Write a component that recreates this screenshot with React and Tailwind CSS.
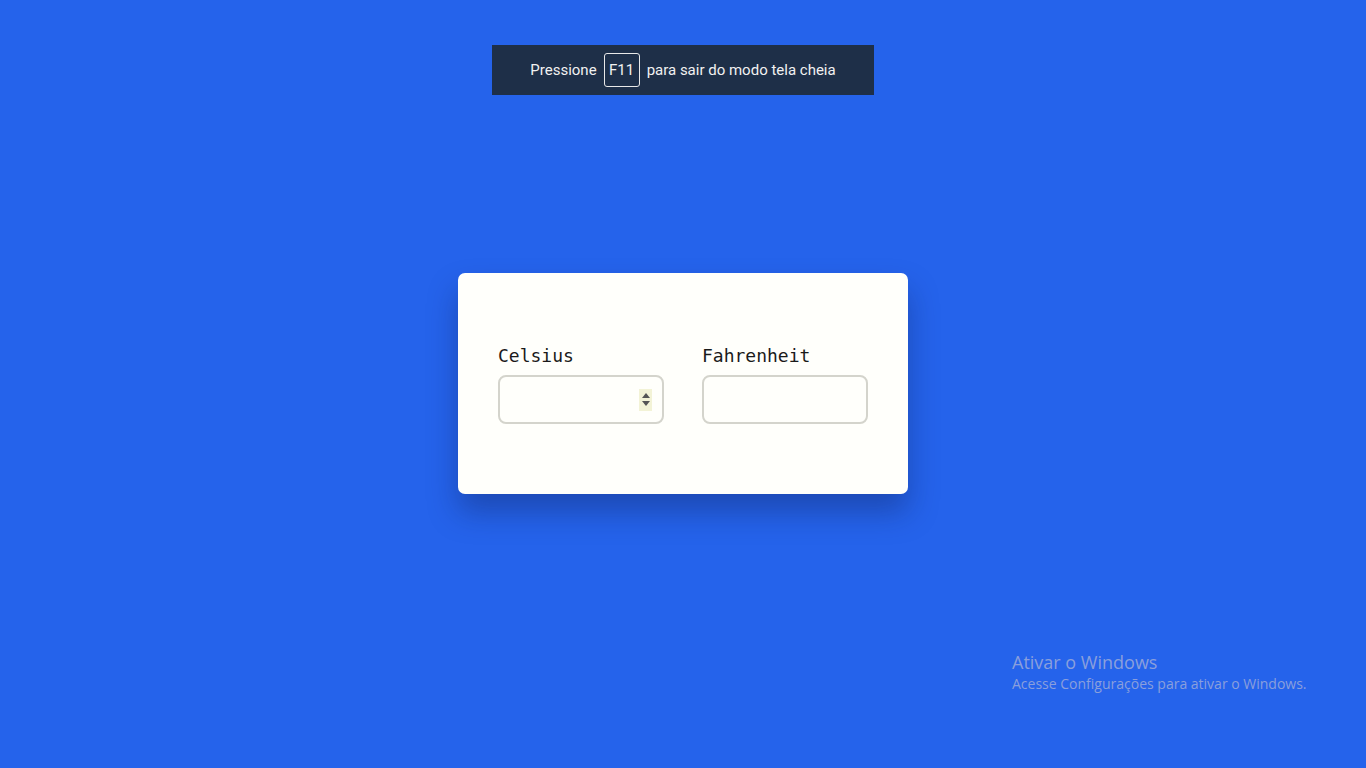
import React from 'react';

export default function App() {
  return (
    <div className="relative min-h-screen w-full bg-[#2563eb] flex flex-col items-center overflow-hidden">
      {/* fullscreen hint */}
      <div className="mt-[45px] h-[50px] w-[382px] bg-[#1e2f48] flex items-center justify-center gap-[7px] text-[15px] text-[#f1f1f1] font-['Roboto',sans-serif]">
        <span>Pressione</span>
        <span className="h-[34px] w-[36px] border border-[#e8e8e8] rounded-[3px] flex items-center justify-center">F11</span>
        <span>para sair do modo tela cheia</span>
      </div>

      {/* converter card */}
      <div className="mt-[178px] w-[450px] h-[221px] bg-[#fffffb] rounded-[7px] shadow-[0_18px_30px_rgba(15,30,80,0.35)] flex items-center justify-center gap-[38px] pt-[2px] font-['DejaVu_Sans_Mono','Liberation_Mono',monospace]">
        <div className="flex flex-col">
          <label className="text-[18px] leading-[20px] text-[#1a1a1a] mb-[9px]">Celsius</label>
          <div className="relative">
            <input
              type="text"
              className="w-[166px] h-[49px] rounded-[8px] border-2 border-[#d4d4cc] bg-transparent outline-none px-2"
            />
            <div className="absolute right-[12px] top-[14px] w-[13px] h-[22px] bg-[#f3f3d6] flex flex-col items-center justify-center gap-[3px]">
              <svg width="8" height="5" viewBox="0 0 8 5"><path d="M4 0L8 5H0Z" fill="#555" /></svg>
              <svg width="8" height="5" viewBox="0 0 8 5"><path d="M0 0H8L4 5Z" fill="#555" /></svg>
            </div>
          </div>
        </div>
        <div className="flex flex-col">
          <label className="text-[18px] leading-[20px] text-[#1a1a1a] mb-[9px]">Fahrenheit</label>
          <input
            type="text"
            className="w-[166px] h-[49px] rounded-[8px] border-2 border-[#d4d4cc] bg-transparent outline-none px-2"
          />
        </div>
      </div>

      {/* windows watermark */}
      <div className="absolute left-[1012px] top-[650px] font-['Open_Sans',sans-serif] text-[#8a9fdc]">
        <div className="text-[18px] leading-[24px]">Ativar o Windows</div>
        <div className="text-[14px] leading-[20px]">Acesse Configurações para ativar o Windows.</div>
      </div>
    </div>
  );
}
